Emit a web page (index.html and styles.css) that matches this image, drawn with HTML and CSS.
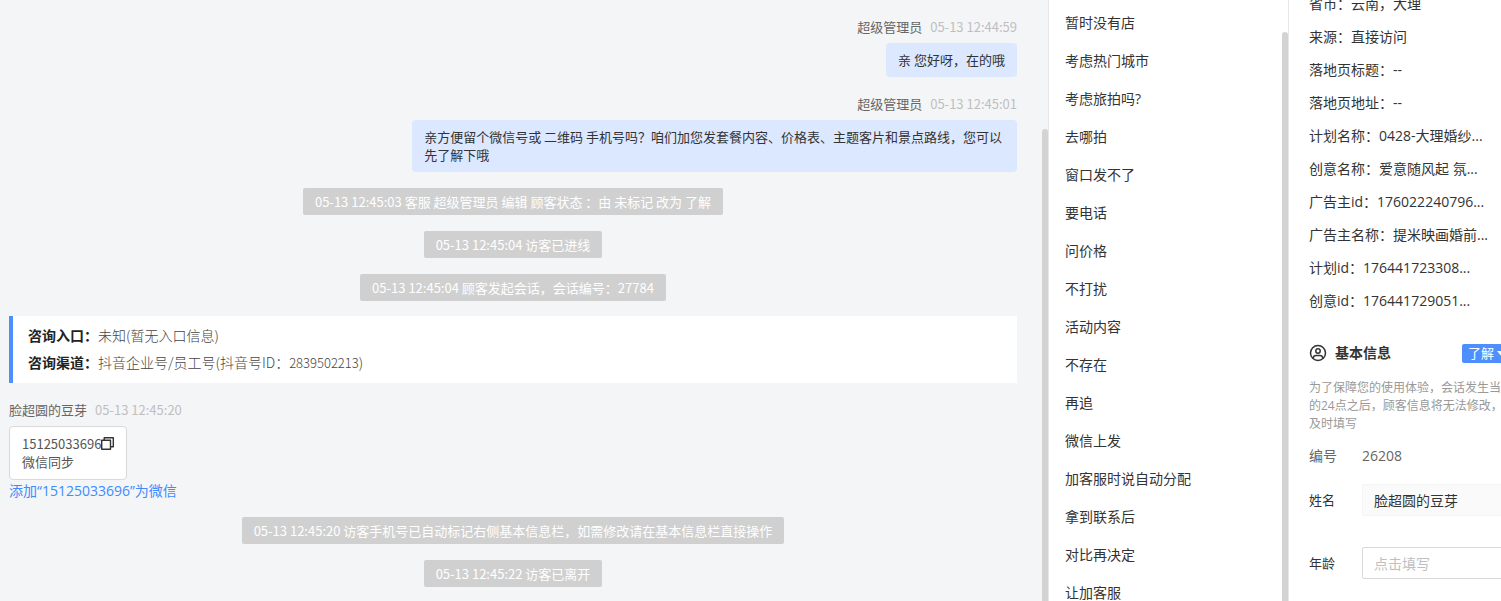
FILE: index.html
```html
<!DOCTYPE html>
<html lang="zh-CN">
<head>
	<meta charset="UTF-8">
	<title>客服会话</title>
	<link rel="stylesheet" href="styles.css">
</head>
<body>
	<div class="page">
		<main class="chat">
			<div class="msg msg_right">
				<p class="who">超级管理员<time>05-13 12:44:59</time></p>
				<div class="bubble">亲 您好呀，在的哦</div>
			</div>
			<div class="msg msg_right">
				<p class="who">超级管理员<time>05-13 12:45:01</time></p>
				<div class="bubble">亲方便留个微信号或 二维码 手机号吗？咱们加您发套餐内容、价格表、主题客片和景点路线，您可以先了解下哦</div>
			</div>
			<p class="sys"><span>05-13 12:45:03 客服 超级管理员 编辑 顾客状态 ：由 未标记 改为 了解</span></p>
			<p class="sys"><span>05-13 12:45:04 访客已进线</span></p>
			<p class="sys"><span>05-13 12:45:04 顾客发起会话，会话编号：27784</span></p>
			<div class="entry">
				<p><b>咨询入口：</b>未知(暂无入口信息)</p>
				<p><b>咨询渠道：</b>抖音企业号/员工号(抖音号ID：<span class="num">2839502213</span>)</p>
			</div>
			<div class="msg">
				<p class="who">脸超圆的豆芽<time>05-13 12:45:20</time></p>
				<div class="bubble">
					15125033696<button class="copy" type="button" aria-label="复制"><svg viewBox="0 0 13 13" width="13" height="13"><path d="M.7 3.200h8.800v9.100H.7zM3.200 3V.7h9.100v9.100H9.700" fill="none" stroke="#333" stroke-width="1.400" stroke-linejoin="round"/></svg></button><br>微信同步
				</div>
				<a class="add" href="#">添加“15125033696”为微信</a>
			</div>
			<p class="sys"><span>05-13 12:45:20 访客手机号已自动标记右侧基本信息栏，如需修改请在基本信息栏直接操作</span></p>
			<p class="sys"><span>05-13 12:45:22 访客已离开</span></p>
			<i class="bar"></i>
		</main>

		<nav class="quick">
			<ul>
				<li>暂时没有店</li>
				<li>考虑热门城市</li>
				<li>考虑旅拍吗?</li>
				<li>去哪拍</li>
				<li>窗口发不了</li>
				<li>要电话</li>
				<li>问价格</li>
				<li>不打扰</li>
				<li>活动内容</li>
				<li>不存在</li>
				<li>再追</li>
				<li>微信上发</li>
				<li>加客服时说自动分配</li>
				<li>拿到联系后</li>
				<li>对比再决定</li>
				<li>让加客服</li>
			</ul>
			<i class="bar"></i>
		</nav>

		<aside class="detail">
			<ul class="source">
				<li>省市：云南，大理</li>
				<li>来源：直接访问</li>
				<li>落地页标题：--</li>
				<li>落地页地址：--</li>
				<li>计划名称：0428-大理婚纱...</li>
				<li>创意名称：爱意随风起 氛...</li>
				<li>广告主id：176022240796...</li>
				<li>广告主名称：提米映画婚前...</li>
				<li>计划id：176441723308...</li>
				<li>创意id：176441729051...</li>
			</ul>
			<div class="title">
				<svg viewBox="0 0 18 18" width="18" height="18" fill="none" stroke="#333" stroke-width="1.5"><circle cx="9" cy="9" r="7.5"/><circle cx="9" cy="7" r="2.2"/><path d="M4 14.300c.5-1.900 1.500-2.700 3-2.700h4c1.500 0 2.500.8 3 2.700"/></svg>
				<h2>基本信息</h2>
				<div class="status">
					<select aria-label="顾客状态">
						<option>了解</option>
					</select>
				</div>
			</div>
			<p class="notice">为了保障您的使用体验，会话发生当<br>的24点之后，顾客信息将无法修改，<br>及时填写</p>
			<dl class="row">
				<dt>编号</dt>
				<dd>26208</dd>
			</dl>
			<div class="row">
				<label for="name">姓名</label>
				<input class="filled" id="name" type="text" value="脸超圆的豆芽">
			</div>
			<div class="row row_age">
				<label for="age">年龄</label>
				<input id="age" type="text" placeholder="点击填写">
			</div>
		</aside>
	</div>
</body>
</html>
```
FILE: styles.css
```css
*{
	margin: 0;
	padding: 0;
	box-sizing: border-box;
}
body{
	overflow: hidden;
	background-color: #fff;
	color: #333;
	font: 14px/22px "Open Sans","Noto Sans CJK SC",sans-serif;
}
ul{
	list-style-type: none;
}
button,input,select{
	font: inherit;
	color: inherit;
}
.page{
	display: grid;
	grid-template-columns: minmax(0,1fr) 240px 213px;
	height: 100vh;
}
.bar{
	position: absolute;
	right: 0;
	bottom: 0;
	width: 6px;
	border-radius: 3px 3px 0 0;
	background-color: #d3d3d3;
}

/* 会话 */
.chat{
	position: relative;
	overflow: hidden;
	padding: 0 31px 0 9px;
	background-color: #f4f5f7;
	font: 13px/18px "Noto Sans CJK SC",sans-serif;
}
.chat .bar{
	top: 129px;
}
.msg{
	display: flex;
	flex-direction: column;
	align-items: flex-start;
	margin-top: 18px;
}
.msg_right{
	align-items: flex-end;
}
.who{
	margin-bottom: 7px;
	color: #666;
}
.who time{
	margin-left: 8px;
	color: #bfbfbf;
}
.bubble{
	max-width: 60%;
	padding: 8px 12px;
	border: 1px solid #d9d9d9;
	border-radius: 4px;
	background-color: #fff;
	color: #555;
}
.msg_right .bubble{
	border: 0;
	background-color: #dce8ff;
	color: #333;
}
.copy{
	height: 13px;
	border: 0;
	background: none;
	vertical-align: -1px;
	cursor: pointer;
}
.copy svg{
	display: block;
}
.add{
	color: #3d8bff;
	font: 14px/21px "Open Sans","Noto Sans CJK SC",sans-serif;
	text-decoration: none;
}
.sys{
	margin-top: 16px;
	text-align: center;
}
.sys span{
	display: block;
	width: fit-content;
	margin: auto;
	padding: 0 12px;
	border-radius: 2px;
	background-color: #d0d0d0;
	color: #fff;
	line-height: 27px;
}
.entry{
	margin-top: 15px;
	padding: 6px 15px 7px;
	border-left: 4px solid #4e8fff;
	background-color: #fff;
	color: #444;
	font-size: 14px;
	font-weight: 300;
	line-height: 27px;
}
.entry b{
	color: #222;
	font-weight: 700;
}
.entry .num{
	font-size: 13px;
}

/* 快捷回复 */
.quick{
	position: relative;
	overflow: hidden;
	padding: 4px 16px 0;
	border-left: 1px solid #e8e8e8;
}
.quick li{
	line-height: 38px;
}
.quick .bar{
	top: 32px;
}

/* 顾客信息，内容比可视区宽 */
.detail{
	overflow: hidden;
	padding-left: 20px;
	border-left: 1px solid #e8e8e8;
	white-space: nowrap;
}
.source{
	margin-top: -13px;
}
.source li{
	line-height: 33px;
}
.title{
	display: flex;
	align-items: center;
	margin-top: 25px;
}
.title h2{
	margin-left: 8px;
	font-size: 14px;
}
.status{
	position: relative;
	flex: none;
	margin: 0 -12px 0 auto;
}
.status select{
	display: block;
	width: 51px;
	height: 19px;
	padding-left: 6px;
	border: 0;
	border-radius: 2px;
	background-color: #4e8fff;
	color: #fff;
	font-size: 13px;
	line-height: 19px;
	appearance: none;
}
.status::after{
	content: '';
	position: absolute;
	top: 7px;
	right: 6px;
	border: 5px solid transparent;
	border-top: 6px solid #fff;
	border-bottom: 0;
	pointer-events: none;
}
.notice{
	margin-top: 15px;
	color: #999;
	font-size: 12px;
	line-height: 18px;
}
.row{
	display: flex;
	align-items: center;
	height: 32px;
	margin: 7px -8px 12px 0;
}
.row dt,.row label{
	flex: none;
	width: 53px;
}
.row label{
	font-size: 13px;
}
dl.row{
	color: #666;
}
.row input{
	flex: 1;
	min-width: 0;
	height: 32px;
	padding: 0 11px;
	border: 1px solid #d9d9d9;
	border-radius: 2px;
}
.row .filled{
	border-color: #f5f5f5;
	background-color: #fafafa;
}
.row input::placeholder{
	color: #bfbfbf;
}
.row_age{
	margin-top: 31px;
}
```
